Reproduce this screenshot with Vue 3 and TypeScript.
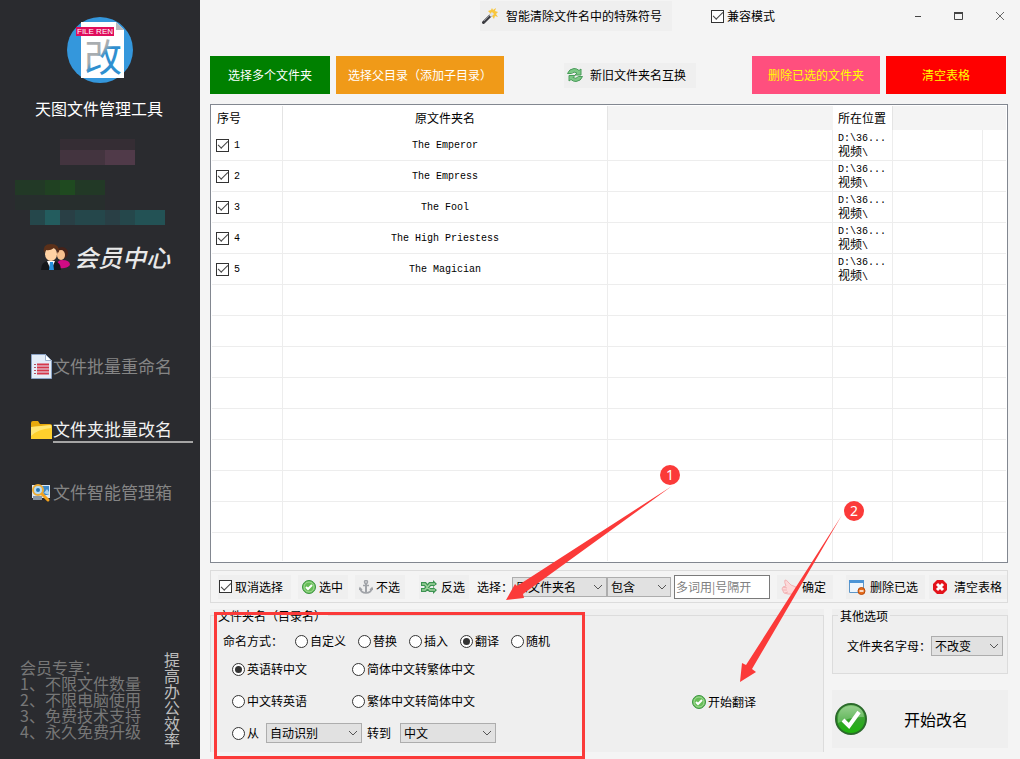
<script setup lang="ts">
import { ref } from 'vue'

interface FolderRow {
  id: number
  name: string
  checked: boolean
}

const rows = ref<FolderRow[]>([
  { id: 1, name: 'The Emperor', checked: true },
  { id: 2, name: 'The Empress', checked: true },
  { id: 3, name: 'The Fool', checked: true },
  { id: 4, name: 'The High Priestess', checked: true },
  { id: 5, name: 'The Magician', checked: true },
])
const emptyRows = 8

const compatible = ref(true)
const unselect = ref(true)
const mode = ref('翻译')
const modes: string[] = ['自定义', '替换', '插入', '翻译', '随机']
const direction = ref('en-zh')
const perks: string[] = ['1、不限文件数量', '2、不限电脑使用', '3、免费技术支持', '4、永久免费升级']
</script>

<template>
  <div class="app">
    <aside class="sidebar">
      <svg class="logo" viewBox="0 0 66 66" aria-hidden="true">
        <defs>
          <linearGradient id="glyph" x1="0" y1="0" x2="0.7" y2="1">
            <stop offset="0.5" stop-color="#a9adb0" />
            <stop offset="0.6" stop-color="#2f8fd0" />
          </linearGradient>
        </defs>
        <circle cx="33" cy="33" r="33" fill="#3497dc" />
        <path d="M14 5h35l8 8v48H14z" fill="#fff" />
        <path d="M49 5l8 8h-8z" fill="#b6b9bc" />
        <text x="17" y="54" font-size="38" fill="url(#glyph)">改</text>
        <rect x="9" y="10" width="38" height="9" fill="#e00d5c" />
        <text x="10" y="17" font-size="8" fill="#fff" class="latin">FILE REN</text>
      </svg>
      <h1>天图文件管理工具</h1>
      <div class="mosaic pink"><i v-for="n in 10" :key="n"></i></div>
      <div class="mosaic green"><i v-for="n in 6" :key="n"></i></div>
      <div class="mosaic teal"><i v-for="n in 9" :key="n"></i></div>
      <a href="#" class="member">
        <svg width="30" height="30" viewBox="0 0 30 30" aria-hidden="true">
          <path d="M17 22q1-4 5-4 8 0 8 5-4 4-10 3z" fill="#cf0b84" />
          <circle cx="22" cy="11" r="6" fill="#45231a" />
          <ellipse cx="21" cy="13" rx="4" ry="5" fill="#f6c08e" />
          <path d="M1 28q0-8 7-9h6q7 1 7 9z" fill="#15171a" />
          <path d="M7 19l4 9 4-9z" fill="#fff" />
          <path d="M10 20h3l1 8h-5z" fill="#2590dc" />
          <ellipse cx="11" cy="12" rx="6" ry="7" fill="#ffd2a4" />
          <path d="M4 11Q2 2 11 2t8 9q-2-4-5-5-4 3-8 2z" fill="#5b3019" />
        </svg>
        <span>会员中心</span>
      </a>
      <nav>
        <a href="#" class="nav-item">
          <svg width="22" height="26" viewBox="0 0 22 26" aria-hidden="true">
            <path d="M.5.500h14l6 6v18H.5z" fill="#e4edf8" stroke="#8ba3c6" />
            <path d="M14.500.500v6h6z" fill="#fff" stroke="#9db1cc" />
            <path d="M3 10.500h2M3 13.500h2M3 16.500h2M3 19.500h2" stroke="#b05062" />
            <path d="M6 10.500h12M6 13.500h12M6 16.500h12M6 19.500h12" stroke="#d5374a" stroke-width="2" />
          </svg>
          <span>文件批量重命名</span>
        </a>
        <a href="#" class="nav-item active">
          <svg width="22" height="22" viewBox="0 0 22 22" aria-hidden="true">
            <path d="M0 4q0-2 2-2h5l2 3h10q2 0 2 2v13H0z" fill="#e8a90c" />
            <path d="M0 8l20-2q1 0 1 2v12H0z" fill="#ffd02d" />
            <path d="M0 8l20-2v3Q7 10 0 17z" fill="#ffe675" />
          </svg>
          <span>文件夹批量改名</span>
        </a>
        <a href="#" class="nav-item">
          <svg width="22" height="20" viewBox="0 0 22 20" aria-hidden="true">
            <path d="M1 2h18v13H1z" fill="#dbe8f4" />
            <path d="M10 3h8v9h-5z" fill="#3c87c8" />
            <path d="M13 10l3-4 2 3v3z" fill="#a8d2ee" />
            <path d="M2 13h9v4H2z" fill="#8896a5" />
            <circle cx="7" cy="7" r="5" fill="#b7ddf5" stroke="#edac35" stroke-width="2" />
            <circle cx="7" cy="7" r="2" fill="#2675b4" />
            <path d="M11 11l6 6" stroke="#f3a21d" stroke-width="3" stroke-linecap="round" />
          </svg>
          <span>文件智能管理箱</span>
        </a>
      </nav>
      <div class="perks">
        <div class="perk-list">
          <p>会员专享：</p>
          <p v-for="perk in perks" :key="perk">{{ perk }}</p>
        </div>
        <p class="slogan">提高办公效率</p>
      </div>
    </aside>

    <main>
      <header class="titlebar">
        <button class="flat magic">
          <svg width="16" height="16" viewBox="0 0 16 16" aria-hidden="true">
            <path d="M10 0l1 2 3-2-1 3 3 1-2 2 2 3-3-1-1 3-2-3-3 1 1-4-2-2 3-1z" fill="#f8c63d" />
            <path d="M1.500 14.500l7-7" stroke="#3b3b40" stroke-width="3" stroke-linecap="round" />
            <path d="M8 8l3-3" stroke="#dfe2e8" stroke-width="3" />
            <path d="M2 13l6-6" stroke="#8d8f96" />
          </svg>
          智能清除文件名中的特殊符号
        </button>
        <label class="tick compat"><input v-model="compatible" type="checkbox" />兼容模式</label>
        <div class="window-controls">
          <button aria-label="最小化"><svg width="10" height="10" viewBox="0 0 10 10"><path d="M2 5.500h6" stroke="#444" /></svg></button>
          <button aria-label="最大化"><svg width="10" height="10" viewBox="0 0 10 10"><path d="M.5 1.500h8v7h-8z" fill="none" stroke="#444" /><path d="M0 2h9" stroke="#444" stroke-width="2" /></svg></button>
          <button aria-label="关闭"><svg width="10" height="10" viewBox="0 0 10 10"><path d="M1 1l8 8M9 1L1 9" stroke="#666" /></svg></button>
        </div>
      </header>

      <div class="toolbar">
        <button class="block choose">选择多个文件夹</button>
        <button class="block parent">选择父目录（添加子目录）</button>
        <button class="flat swap">
          <svg width="16" height="16" viewBox="0 0 16 16" aria-hidden="true">
            <g fill="#7cc885" stroke="#4a9c5b" stroke-linejoin="round">
              <path d="M.5 6.500Q2 2 7 1.500q3 0 5 2l2-1.500v6H8l2-2Q7 4 4.500 6.500z" />
              <path d="M15.500 9.500Q14 14 9 14.500q-3 0-5-2L2 14V8.500h6l-2 2q3 2 5.500-1z" />
            </g>
          </svg>
          新旧文件夹名互换
        </button>
        <button class="block remove">删除已选的文件夹</button>
        <button class="block clear">清空表格</button>
      </div>

      <div class="table-box">
        <table>
          <colgroup>
            <col class="c-index" /><col class="c-name" /><col /><col class="c-place" /><col class="c-extra" /><col class="c-end" />
          </colgroup>
          <thead>
            <tr><th class="left">序号</th><th>原文件夹名</th><th class="blank"></th><th class="left">所在位置</th><th class="blank" colspan="2"></th></tr>
          </thead>
          <tbody>
            <tr v-for="row in rows" :key="row.id">
              <td><label class="tick row-tick"><input v-model="row.checked" type="checkbox" />{{ row.id }}</label></td>
              <td class="name">{{ row.name }}</td>
              <td></td>
              <td class="place"><span class="mono">D:\36...</span><br />视频<span class="mono">\</span></td>
              <td></td>
              <td></td>
            </tr>
            <tr v-for="n in emptyRows" :key="'empty' + n"><td v-for="c in 6" :key="c"></td></tr>
            <tr class="last"><td v-for="c in 6" :key="c"></td></tr>
          </tbody>
        </table>
      </div>

      <div class="filterbar">
        <label class="tick flat-label"><input v-model="unselect" type="checkbox" />取消选择</label>
        <button class="flat small">
          <svg width="14" height="14" viewBox="0 0 14 14" aria-hidden="true">
            <circle cx="7" cy="7" r="6.500" fill="#67bd57" stroke="#3b9440" />
            <circle cx="7" cy="7" r="5" fill="none" stroke="#a5dc9a" />
            <path d="M4 7l2 2 4-4" fill="none" stroke="#fff" stroke-width="2" />
          </svg>
          选中
        </button>
        <button class="flat small">
          <svg width="14" height="14" viewBox="0 0 14 14" aria-hidden="true">
            <g fill="none" stroke="#a0a3a8" stroke-width="1.500">
              <circle cx="7" cy="2" r="1.500" /><path d="M4 5.500h6M1 8q1 5 6 5t6-5M0 10l1-2 2 2M11 10l2-2 1 2" />
              <path d="M7 4v9" stroke-width="2" />
            </g>
          </svg>
          不选
        </button>
        <button class="flat small invert">
          <svg width="16" height="14" viewBox="0 0 16 14" aria-hidden="true">
            <g fill="none" stroke="#3d9252" stroke-width="4"><path d="M0 4h4l5 6h4M0 10h4l5-6h4" /></g>
            <path d="M12 0l4 4-4 3zM12 7l4 3-4 4z" fill="#3d9252" />
            <path d="M1 4h3l5 6h5M1 10h3l5-6h5" fill="none" stroke="#9dd49c" stroke-width="1.500" />
          </svg>
          反选
        </button>
        <label class="choose-label" for="field">选择：</label>
        <span class="combo w95"><select id="field"><option>原文件夹名</option></select><svg width="10" height="6" viewBox="0 0 10 6"><path d="M1 1l4 4 4-4" /></svg></span>
        <span class="combo w64"><select aria-label="条件"><option>包含</option></select><svg width="10" height="6" viewBox="0 0 10 6"><path d="M1 1l4 4 4-4" /></svg></span>
        <input class="words" type="text" placeholder="多词用|号隔开" aria-label="关键词" />
        <button class="flat small confirm">
          <svg width="17" height="16" viewBox="0 0 17 16" aria-hidden="true">
            <path d="M5 7Q3 3 4 1q2 0 3 2l3 3 5 2v5q-4 3-8 2l-4-1-1-2-1-2 1-2z" fill="#fcd9d9" stroke="#f2b4b6" />
            <path d="M2 8l4 1M2 11l4 0M4 14l3-1" stroke="#f2b4b6" />
          </svg>
          确定
        </button>
        <button class="flat small delete">
          <svg width="17" height="16" viewBox="0 0 17 16" aria-hidden="true">
            <path d="M.5 1.500h14v12H.5z" fill="#eef5fc" stroke="#5d96c8" />
            <path d="M0 1h15v3H0z" fill="#4c94d6" />
            <circle cx="12.500" cy="12" r="3.500" fill="#e66d1d" stroke="#b94c0c" />
            <path d="M10.500 12h4" stroke="#fff" stroke-width="1.500" />
          </svg>
          删除已选
        </button>
        <button class="flat small wipe">
          <svg width="14" height="14" viewBox="0 0 14 14" aria-hidden="true">
            <path d="M4 0h6l4 4v6l-4 4H4l-4-4V4z" fill="#e3131b" />
            <path d="M4 4l6 6M10 4l-6 6" stroke="#fff" stroke-width="3" />
          </svg>
          清空表格
        </button>
      </div>

      <div class="bottom">
        <section class="group naming">
          <div class="frame"></div>
          <h2>文件夹名（目录名）</h2>
          <div class="modes">
            <span>命名方式：</span>
            <label v-for="m in modes" :key="m" class="radio"><input v-model="mode" type="radio" name="mode" :value="m" />{{ m }}</label>
          </div>
          <div class="translate">
            <div class="options">
              <label class="radio"><input v-model="direction" type="radio" name="dir" value="en-zh" />英语转中文</label>
              <label class="radio"><input v-model="direction" type="radio" name="dir" value="s-t" />简体中文转繁体中文</label>
              <label class="radio"><input v-model="direction" type="radio" name="dir" value="zh-en" />中文转英语</label>
              <label class="radio"><input v-model="direction" type="radio" name="dir" value="t-s" />繁体中文转简体中文</label>
              <div class="custom">
                <label class="radio"><input v-model="direction" type="radio" name="dir" value="custom" />从</label>
                <span class="combo w96 from"><select aria-label="源语言"><option>自动识别</option></select><svg width="10" height="6" viewBox="0 0 10 6"><path d="M1 1l4 4 4-4" /></svg></span>
                <label for="target">转到</label>
                <span class="combo w96 to"><select id="target"><option>中文</option></select><svg width="10" height="6" viewBox="0 0 10 6"><path d="M1 1l4 4 4-4" /></svg></span>
              </div>
            </div>
            <button class="flat run">
              <svg width="14" height="14" viewBox="0 0 14 14" aria-hidden="true">
                <circle cx="7" cy="7" r="6.500" fill="#67bd57" stroke="#3b9440" />
                <circle cx="7" cy="7" r="5" fill="none" stroke="#a5dc9a" />
                <path d="M4 7l2 2 4-4" fill="none" stroke="#fff" stroke-width="2" />
              </svg>
              开始翻译
            </button>
          </div>
        </section>
        <div class="side">
          <section class="group other">
            <div class="frame"></div>
            <h2>其他选项</h2>
            <div class="letters">
              <label for="letters">文件夹名字母：</label>
              <span class="combo w72"><select id="letters"><option>不改变</option></select><svg width="10" height="6" viewBox="0 0 10 6"><path d="M1 1l4 4 4-4" /></svg></span>
            </div>
          </section>
          <button class="start">
            <svg width="32" height="32" viewBox="0 0 32 32" aria-hidden="true">
              <defs>
                <linearGradient id="ball" x1="0" y1="0" x2="0" y2="1">
                  <stop offset="0" stop-color="#7cc470" /><stop offset="0.500" stop-color="#37a32e" /><stop offset="1" stop-color="#1cb50a" />
                </linearGradient>
              </defs>
              <circle cx="16" cy="16" r="15" fill="url(#ball)" stroke="#2b6a2b" stroke-width="2" />
              <path d="M3 15Q4 3 16 3t13 11Q16 13 3 20z" fill="#fff" opacity="0.250" />
              <path d="M8 17l6 6L24 9" fill="none" stroke="#fff" stroke-width="4" />
            </svg>
            <span>开始改名</span>
          </button>
        </div>
      </div>
    </main>

    <div class="highlight"></div>
    <svg class="arrow arrow-one" width="166" height="114" viewBox="506 486 166 114" aria-hidden="true">
      <path d="M672 486L517 586l-2-2-9 16 18-2-1-4z" />
    </svg>
    <svg class="arrow arrow-two" width="102" height="167" viewBox="740 515 102 167" aria-hidden="true">
      <path d="M842 515l-96 150-4-2-2 19 16-10-4-3z" />
    </svg>
    <span class="badge badge-one">1</span>
    <span class="badge badge-two">2</span>
  </div>
</template>

<style>
body {
  margin: 0;
}
</style>

<style scoped>
* {
  box-sizing: border-box;
}
.app {
  position: relative;
  display: flex;
  min-height: 100vh;
  background: #f4f4f4;
  color: #000;
  font: 12px/16px "Noto Sans CJK SC", sans-serif;
}
h1, h2, p {
  margin: 0;
  font-weight: 400;
}
a {
  color: inherit;
  text-decoration: none;
}
svg {
  flex: none;
  display: block;
}
button, input, select {
  font: inherit;
  color: inherit;
}
button {
  border: 0;
  padding: 0;
  background: none;
  white-space: nowrap;
}
.latin {
  font-family: "Liberation Sans", sans-serif;
}
.mono {
  font-family: "Liberation Mono", monospace;
  font-size: 10px;
}

/* Sidebar */
.sidebar {
  display: flex;
  flex-direction: column;
  flex: none;
  width: 200px;
  padding: 17px 0 12px;
  background: #2a2b2f;
}
.logo {
  width: 66px;
  height: 66px;
  margin-left: 67px;
}
h1 {
  margin: 13px 0 0 35px;
  font-size: 16px;
  line-height: 24px;
  color: #fff;
}
.mosaic {
  display: flex;
  flex-wrap: wrap;
}
.mosaic i {
  width: 15px;
  height: 15px;
}
.pink {
  width: 75px;
  margin: 19px 0 0 60px;
}
.pink i {
  background: #43343f;
}
.pink i:nth-child(-n+5) {
  height: 11px;
  background: #352d34;
}
.pink i:nth-child(n+9) {
  background: #503a49;
}
.green {
  width: 90px;
  margin: 15px 0 0 15px;
  border-bottom: 15px solid #272e2d;
  box-sizing: content-box;
}
.green i {
  background: #223926;
}
.green i:nth-child(3) {
  background: #204122;
}
.green i:nth-child(4) {
  background: #1f4a20;
}
.teal {
  width: 135px;
  margin-left: 30px;
}
.teal i {
  background: #25474b;
}
.teal i:nth-child(2) {
  background: #235c5e;
}
.teal i:nth-child(3n) {
  background: #293f45;
}
.teal i:nth-child(n+8) {
  background: #235255;
}
.member {
  display: flex;
  align-items: center;
  gap: 4px;
  height: 32px;
  margin: 16px 0 0 40px;
  color: #e8e8e8;
  font-size: 24px;
  line-height: 32px;
  font-style: italic;
  font-weight: 500;
}
nav {
  display: flex;
  flex-direction: column;
  gap: 36px;
  margin-top: 80px;
}
.nav-item {
  display: flex;
  align-items: center;
  height: 27px;
  padding: 0 7px 0 31px;
  color: #858585;
  font-size: 17px;
  line-height: 25px;
}
.nav-item span {
  flex: 1;
  border-bottom: 2px solid transparent;
}
.nav-item.active {
  color: #f2f2f2;
}
.nav-item.active span {
  border-color: #a5a5a5;
}
.perks {
  display: flex;
  justify-content: space-between;
  align-items: flex-end;
  margin-top: auto;
  padding: 0 20px;
  font-size: 16px;
  line-height: 16px;
  color: #777;
}
.perk-list {
  padding-bottom: 8px;
  white-space: nowrap;
}
.slogan {
  width: 16px;
  color: #bdbdbd;
}

/* Main */
main {
  flex: 1;
  min-width: 0;
  display: flex;
  flex-direction: column;
  padding: 0 12px 7px 10px;
}
.flat {
  display: flex;
  align-items: center;
  background: #efefef;
}
.titlebar {
  display: flex;
  align-items: center;
  height: 32px;
  margin-right: -12px;
  padding-left: 270px;
}
.magic {
  gap: 8px;
  width: 192px;
  height: 30px;
  padding-left: 2px;
}
.compat {
  margin-left: 39px;
}
.window-controls {
  display: flex;
  margin-left: auto;
}
.window-controls button {
  display: grid;
  place-items: center;
  width: 41px;
  height: 32px;
}
.tick {
  display: flex;
  align-items: center;
  gap: 3px;
}
input[type="checkbox"] {
  appearance: none;
  display: grid;
  place-items: center;
  width: 13px;
  height: 13px;
  margin: 0;
  border: 1px solid #333;
  background: #fff;
}
input[type="checkbox"]:checked::after {
  content: "";
  width: 9px;
  height: 4px;
  margin-top: -3px;
  border: solid #444;
  border-width: 0 0 1px 1px;
  transform: rotate(-45deg);
}
input[type="radio"] {
  appearance: none;
  display: grid;
  place-items: center;
  width: 13px;
  height: 13px;
  margin: 0;
  border: 1px solid #333;
  border-radius: 50%;
  background: #fff;
}
input[type="radio"]:checked::after {
  content: "";
  width: 7px;
  height: 7px;
  border-radius: 50%;
  background: #333;
}
.radio {
  display: flex;
  align-items: center;
  gap: 2px;
}
.toolbar {
  display: flex;
  align-items: center;
  gap: 6px;
  margin-top: 24px;
  padding-right: 2px;
}
.block {
  height: 38px;
  color: #fff;
}
.choose {
  width: 120px;
  background: #008000;
}
.parent {
  width: 168px;
  background: #f09a18;
}
.swap {
  gap: 7px;
  width: 132px;
  height: 25px;
  margin-left: 54px;
  padding-left: 3px;
}
.remove {
  width: 128px;
  margin-left: auto;
  background: #ff4f7e;
  color: #ff0;
}
.clear {
  width: 120px;
  background: #f00;
  color: #ff0;
}
.table-box {
  flex: 1;
  margin-top: 10px;
  padding: 1px;
  border: 1px solid #828790;
  background: #fff;
}
table {
  width: 100%;
  table-layout: fixed;
  border-collapse: separate;
  border-spacing: 0;
}
.c-index { width: 71px; }
.c-name { width: 325px; }
.c-place { width: 60px; }
.c-extra { width: 90px; }
.c-end { width: 23px; }
th {
  height: 24px;
  padding: 0;
  border-right: 1px solid #e4e4e4;
  font-weight: 400;
}
th.left {
  padding-left: 5px;
  text-align: left;
  white-space: nowrap;
}
th.blank {
  border-color: #f4f4f4;
  background: #f4f4f4;
}
td {
  height: 31px;
  padding: 0;
  border: solid #ededed;
  border-width: 0 1px 1px 0;
}
td:last-child {
  border-right: 0;
}
.last td {
  height: 28px;
  border-bottom: 0;
}
.name {
  padding-top: 2px;
  font: 10px/12px "Liberation Mono", monospace;
  text-align: center;
}
.place {
  padding-left: 5px;
  line-height: 12px;
  white-space: nowrap;
}
.row-tick {
  gap: 5px;
  padding-left: 4px;
  font: 10px/13px "Liberation Mono", monospace;
}

.filterbar {
  display: flex;
  align-items: center;
  height: 33px;
  margin-top: 7px;
  padding-left: 7px;
  border: 1px solid #dcdcdc;
}
.flat-label {
  width: 73px;
  height: 24px;
  padding-left: 1px;
  background: #efefef;
}
.small {
  gap: 3px;
  width: 50px;
  height: 24px;
  margin-left: 7px;
  padding-left: 4px;
}
.invert {
  gap: 4px;
  margin-left: 14px;
  padding-left: 2px;
}
.choose-label {
  width: 35px;
  margin-left: 8px;
  white-space: nowrap;
}
.combo {
  position: relative;
  display: block;
  flex: none;
}
.combo select {
  display: block;
  appearance: none;
  width: 100%;
  height: 20px;
  padding: 0 18px 0 3px;
  border: 1px solid #adadad;
  border-radius: 0;
  background: #e1e1e1;
  line-height: 18px;
}
.combo svg {
  position: absolute;
  right: 4px;
  top: 7px;
  pointer-events: none;
  fill: none;
  stroke: #555;
}
.w95 { width: 95px; }
.w64 { width: 64px; }
.w96 { width: 96px; }
.w72 { width: 72px; }
.words {
  width: 96px;
  height: 24px;
  margin-left: 3px;
  padding: 0 1px;
  border: 1px solid #7a7a7a;
  border-radius: 0;
  background: #fff;
}
.words::placeholder {
  color: #808080;
}
.confirm {
  gap: 4px;
  width: 56px;
}
.delete {
  gap: 4px;
  width: 79px;
  margin-left: 13px;
  padding-left: 3px;
}
.wipe {
  gap: 7px;
  width: 78px;
  margin-left: auto;
}

.bottom {
  display: flex;
  gap: 8px;
  margin-top: 6px;
}
.group {
  position: relative;
  background: #efefef;
}
.frame {
  position: absolute;
  inset: 6px 0 0;
  border: 1px solid #dcdcdc;
}
.group h2 {
  position: relative;
  width: max-content;
  margin-left: 6px;
  padding: 0 2px;
  background: #efefef;
  font-size: 12px;
  line-height: 13px;
}
.naming {
  flex: 1;
  height: 143px;
}
.naming .frame {
  border-bottom: 0;
}
.modes {
  position: relative;
  display: flex;
  gap: 12px;
  margin: 11px 0 0 13px;
}
.translate {
  position: relative;
  display: flex;
  align-items: center;
  justify-content: space-between;
  padding: 12px 68px 0 22px;
}
.options {
  display: grid;
  grid-template-columns: 120px 150px;
  row-gap: 16px;
}
.options .radio {
  height: 16px;
}
.custom {
  grid-column: 1 / 3;
  display: flex;
  align-items: center;
  height: 20px;
  margin-top: -2px;
}
.from {
  margin: 0 5px 0 7px;
}
.to {
  margin-left: 9px;
}
.run {
  gap: 2px;
}
.side {
  display: flex;
  flex-direction: column;
  width: 176px;
  gap: 16px;
}
.other {
  height: 65px;
}
.letters {
  position: relative;
  display: flex;
  align-items: center;
  margin: 14px 0 0 15px;
}
.start {
  display: flex;
  align-items: center;
  gap: 37px;
  height: 58px;
  padding-left: 3px;
  background: #efefef;
  font-size: 16px;
}

/* Annotations */
.highlight {
  position: absolute;
  left: 214px;
  bottom: 0;
  width: 371px;
  height: 147px;
  border: 3px solid #fb3a39;
  pointer-events: none;
}
.arrow {
  position: absolute;
  fill: #fb3a39;
  pointer-events: none;
}
.arrow-one {
  left: 506px;
  top: 486px;
}
.arrow-two {
  left: 740px;
  top: 515px;
}
.badge {
  position: absolute;
  width: 20px;
  height: 20px;
  border-radius: 50%;
  background: #fb3a39;
  color: #fff;
  font: 14px/20px "Noto Sans", sans-serif;
  text-align: center;
}
.badge-one {
  left: 660px;
  top: 465px;
}
.badge-two {
  left: 844px;
  top: 501px;
}
</style>
